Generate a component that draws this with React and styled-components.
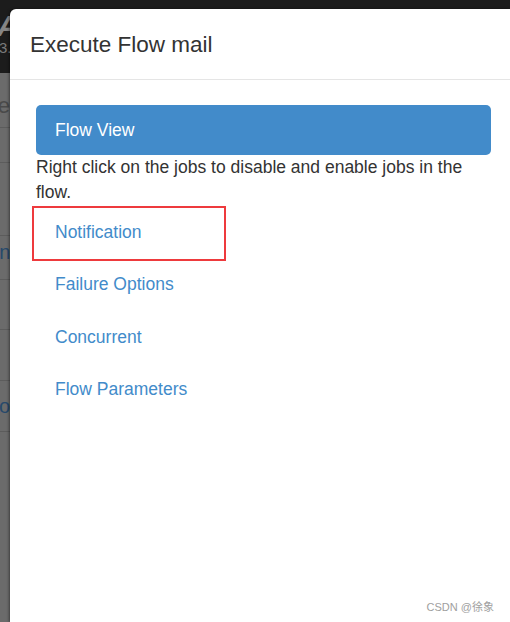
import React from "react";
import styled, { createGlobalStyle } from "styled-components";

const GlobalStyle = createGlobalStyle`
  html, body { margin: 0; padding: 0; }
  body {
    overflow: hidden;
    font-family: "Liberation Sans", Arial, Helvetica, sans-serif;
  }
  * { box-sizing: border-box; }
`;

const Page = styled.div`
  position: relative;
  width: 510px;
  height: 622px;
  overflow: hidden;
  background: #6b6b6b;
`;

const Navbar = styled.div`
  height: 73px;
  background: #1c1c1c;
  padding: 12px 0 0 0;
  display: flex;
  flex-direction: column;
  margin-left: -3px;
`;

const Brand = styled.div`
  font-size: 30px;
  font-weight: bold;
  font-style: italic;
  color: #858585;
  line-height: 28px;
`;

const Version = styled.div`
  font-size: 15px;
  color: #7a7a7a;
  line-height: 16px;
  margin-left: 2px;
`;

const Rows = styled.div`
  display: flex;
  flex-direction: column;
`;

const Row = styled.div`
  height: ${(p) => p.$h}px;
  border-bottom: 1px solid #5c5c5c;
  display: flex;
  align-items: center;
  font-size: ${(p) => p.$fs || 20}px;
  color: ${(p) => (p.$link ? "#27496b" : "#4a4a4a")};
  padding-top: ${(p) => p.$pt || 0}px;
  padding-bottom: ${(p) => p.$pb || 0}px;
  margin-left: ${(p) => p.$offset || 0}px;
  white-space: nowrap;
`;

const Modal = styled.div`
  position: absolute;
  left: 10px;
  top: 9px;
  right: 0;
  bottom: 0;
  background: #ffffff;
  border-radius: 6px 0 0 0;
  box-shadow: -1px 0 3px rgba(0, 0, 0, 0.45);
  display: flex;
  flex-direction: column;
`;

const Header = styled.div`
  height: 71px;
  border-bottom: 1px solid #e5e5e5;
  padding: 0 20px;
  display: flex;
  align-items: center;
`;

const Title = styled.h4`
  margin: 0;
  font-size: 22.5px;
  font-weight: normal;
  color: #333333;
  padding-top: 1px;
`;

const Body = styled.div`
  padding: 25px 19px 0 26px;
`;

const ActivePill = styled.div`
  height: 50px;
  border-radius: 5px;
  background: #428bca;
  color: #ffffff;
  font-size: 17.5px;
  display: flex;
  align-items: center;
  padding: 0 19px;
`;

const Help = styled.p`
  margin: 0;
  font-size: 17.5px;
  line-height: 25px;
  color: #333333;
`;

const NavList = styled.ul`
  list-style: none;
  margin: 2px 0 0 0;
  padding: 0;
  display: flex;
  flex-direction: column;
  gap: 2.5px;
`;

const NavItem = styled.li`
  position: relative;
  height: 50px;
  padding: 0 19px;
  display: flex;
  align-items: center;
  font-size: 17.5px;
  color: #428bca;

  ${(p) =>
    p.$marked &&
    `
    &::after {
      content: "";
      position: absolute;
      left: -4px;
      top: -1px;
      width: 190px;
      height: 51px;
      border: 2px solid #ee3a3d;
    }
  `}
`;

const Watermark = styled.div`
  position: absolute;
  right: 16px;
  bottom: 8px;
  font-size: 11px;
  color: #a0a0a0;
  font-family: "Liberation Sans", "Noto Sans CJK SC", sans-serif;
`;

export default function App() {
  return (
    <>
      <GlobalStyle />
      <Page>
        <Navbar>
          <Brand>Azkaban</Brand>
          <Version>3.x</Version>
        </Navbar>
        <Rows>
          <Row $h={55} $fs={22} $offset={-28} $pt={12}>Exec</Row>
          <Row $h={35} />
          <Row $h={73} />
          <Row $h={44} $link $offset={-14} $pb={10}>Sna</Row>
          <Row $h={50} />
          <Row $h={51} />
          <Row $h={51} $link $offset={-11}>Job</Row>
        </Rows>
        <Modal>
          <Header>
            <Title>Execute Flow mail</Title>
          </Header>
          <Body>
            <ActivePill>Flow View</ActivePill>
            <Help>Right click on the jobs to disable and enable jobs in the flow.</Help>
            <NavList>
              <NavItem $marked>Notification</NavItem>
              <NavItem>Failure Options</NavItem>
              <NavItem>Concurrent</NavItem>
              <NavItem>Flow Parameters</NavItem>
            </NavList>
          </Body>
          <Watermark>CSDN @徐象</Watermark>
        </Modal>
      </Page>
    </>
  );
}
